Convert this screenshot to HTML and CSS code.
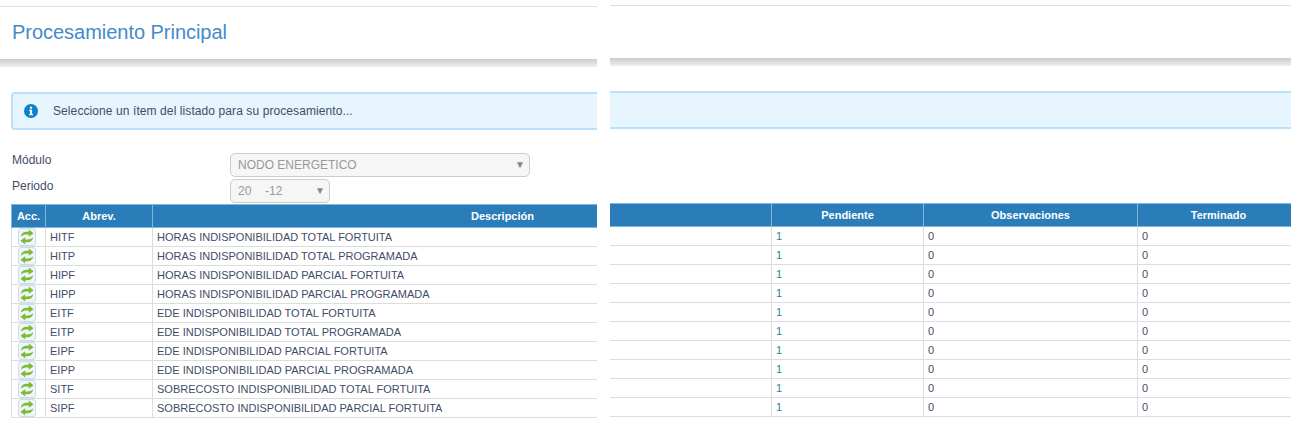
FILE: index.html
```html
<!DOCTYPE html>
<html lang="es">
<head>
  <meta charset="UTF-8" />
  <meta name="viewport" content="width=device-width, initial-scale=1.0" />
  <title>Procesamiento Principal</title>
  <link rel="stylesheet" href="styles.css">
</head>
<body>
  <svg class="defs" width="0" height="0">
    <symbol id="reload" viewBox="0 0 16 16">
      <path d="M1.8 7.8C2.2 4.6 4.6 2.8 7.4 2.8L9.8 2.8V0.6L14.6 4.2L9.8 7.8V5.6L7.6 5.6C5.4 5.6 3.6 6.2 1.8 7.8Z" fill="#7cbc34"/>
      <path d="M14.2 8.2C13.8 11.4 11.4 13.2 8.6 13.2L6.2 13.2V15.4L1.4 11.8L6.2 8.2V10.4L8.4 10.4C10.6 10.4 12.4 9.8 14.2 8.2Z" fill="#7cbc34"/>
    </symbol>
  </svg>

  <div class="panes">
    <section class="pane pane-left">
      <header class="head">
        <h1>Procesamiento Principal</h1>
      </header>
      <div class="head-shadow"></div>
      <div class="alert">
        <svg class="alert-icon" viewBox="0 0 14 14" width="14" height="14">
          <circle cx="7" cy="7" r="7" fill="#0a83c6"/>
          <rect x="5.9" y="2.7" width="2.2" height="2" fill="#fff"/>
          <path d="M5.2 5.8H8.1V9.9H9V11.2H5.2V9.9H6V7.1H5.2Z" fill="#fff"/>
        </svg>
        <span>Seleccione un ítem del listado para su procesamiento...</span>
      </div>
      <div class="filters">
        <div class="filter-row">
          <label>Módulo</label>
          <div class="select select-wide">NODO ENERGETICO<span class="arrow">▼</span></div>
        </div>
        <div class="filter-row">
          <label>Periodo</label>
          <div class="select select-small"><span class="year">20</span>-12<span class="arrow">▼</span></div>
        </div>
      </div>
      <table class="grid grid-left">
        <colgroup><col class="c-acc"><col class="c-abrev"><col class="c-desc"></colgroup>
        <thead>
          <tr><th>Acc.</th><th>Abrev.</th><th>Descripción</th></tr>
        </thead>
        <tbody>
          <tr><td class="acc"><span class="btn"><svg width="16" height="16"><use href="#reload"/></svg></span></td><td>HITF</td><td>HORAS INDISPONIBILIDAD TOTAL FORTUITA</td></tr>
          <tr><td class="acc"><span class="btn"><svg width="16" height="16"><use href="#reload"/></svg></span></td><td>HITP</td><td>HORAS INDISPONIBILIDAD TOTAL PROGRAMADA</td></tr>
          <tr><td class="acc"><span class="btn"><svg width="16" height="16"><use href="#reload"/></svg></span></td><td>HIPF</td><td>HORAS INDISPONIBILIDAD PARCIAL FORTUITA</td></tr>
          <tr><td class="acc"><span class="btn"><svg width="16" height="16"><use href="#reload"/></svg></span></td><td>HIPP</td><td>HORAS INDISPONIBILIDAD PARCIAL PROGRAMADA</td></tr>
          <tr><td class="acc"><span class="btn"><svg width="16" height="16"><use href="#reload"/></svg></span></td><td>EITF</td><td>EDE INDISPONIBILIDAD TOTAL FORTUITA</td></tr>
          <tr><td class="acc"><span class="btn"><svg width="16" height="16"><use href="#reload"/></svg></span></td><td>EITP</td><td>EDE INDISPONIBILIDAD TOTAL PROGRAMADA</td></tr>
          <tr><td class="acc"><span class="btn"><svg width="16" height="16"><use href="#reload"/></svg></span></td><td>EIPF</td><td>EDE INDISPONIBILIDAD PARCIAL FORTUITA</td></tr>
          <tr><td class="acc"><span class="btn"><svg width="16" height="16"><use href="#reload"/></svg></span></td><td>EIPP</td><td>EDE INDISPONIBILIDAD PARCIAL PROGRAMADA</td></tr>
          <tr><td class="acc"><span class="btn"><svg width="16" height="16"><use href="#reload"/></svg></span></td><td>SITF</td><td>SOBRECOSTO INDISPONIBILIDAD TOTAL FORTUITA</td></tr>
          <tr><td class="acc"><span class="btn"><svg width="16" height="16"><use href="#reload"/></svg></span></td><td>SIPF</td><td>SOBRECOSTO INDISPONIBILIDAD PARCIAL FORTUITA</td></tr>
        </tbody>
      </table>
    </section>

    <section class="pane pane-right">
      <header class="head"></header>
      <div class="head-shadow"></div>
      <div class="alert alert-cont"></div>
      <div class="filters"></div>
      <table class="grid grid-right">
        <colgroup><col class="c-rest"><col class="c-pend"><col class="c-obs"><col class="c-term"></colgroup>
        <thead>
          <tr><th></th><th>Pendiente</th><th>Observaciones</th><th>Terminado</th></tr>
        </thead>
        <tbody>
          <tr><td></td><td class="num-pend">1</td><td>0</td><td>0</td></tr>
          <tr><td></td><td class="num-pend">1</td><td>0</td><td>0</td></tr>
          <tr><td></td><td class="num-pend">1</td><td>0</td><td>0</td></tr>
          <tr><td></td><td class="num-pend">1</td><td>0</td><td>0</td></tr>
          <tr><td></td><td class="num-pend">1</td><td>0</td><td>0</td></tr>
          <tr><td></td><td class="num-pend">1</td><td>0</td><td>0</td></tr>
          <tr><td></td><td class="num-pend">1</td><td>0</td><td>0</td></tr>
          <tr><td></td><td class="num-pend">1</td><td>0</td><td>0</td></tr>
          <tr><td></td><td class="num-pend">1</td><td>0</td><td>0</td></tr>
          <tr><td></td><td class="num-pend">1</td><td>0</td><td>0</td></tr>
        </tbody>
      </table>
    </section>
  </div>
</body>
</html>
```

FILE: styles.css
```css
html, body {
  margin: 0;
  height: 430px;
  overflow: hidden;
  background: white;
}
body {
  font-family: "Liberation Sans", Arial, sans-serif;
  font-size: 12px;
  color: #3f4d67;
}
.defs {
  display: block;
  height: 0;
}
.panes {
  display: flex;
  gap: 13px;
}
.pane {
  overflow: hidden;
  height: 430px;
  box-sizing: border-box;
}
.pane-left {
  width: 597px;
  padding-top: 6px;
}
.pane-right {
  width: 681px;
  padding-top: 5px;
}

.head {
  height: 50px;
  border-top: 1px solid #dfdfdf;
  display: flex;
  align-items: center;
  padding-left: 12px;
  padding-bottom: 2px;
}
.head h1 {
  margin: 0;
  font-size: 20px;
  font-weight: normal;
  letter-spacing: -0.03px;
  color: #428bca;
}
.head-shadow {
  height: 8px;
  background: linear-gradient(#c9cdcd, #edf0f0);
}

.alert {
  margin: 25px 0 0 11px;
  width: 620px;
  height: 38px;
  box-sizing: border-box;
  display: flex;
  align-items: center;
  padding-left: 11px;
  gap: 15px;
  letter-spacing: 0.09px;
  background: #e6f5fe;
  border: 2px solid #b9e1fa;
  border-radius: 4px;
}
.alert-cont {
  margin-left: -20px;
  width: 740px;
}
.alert-icon {
  flex: none;
}

.filters {
  margin-top: 23px;
  height: 50px;
  display: flex;
  flex-direction: column;
  gap: 2px;
}
.filter-row {
  display: flex;
  height: 24px;
  padding-left: 12px;
}
.filter-row label {
  width: 218px;
  flex: none;
  line-height: 14px;
}
.select {
  position: relative;
  box-sizing: border-box;
  height: 24px;
  line-height: 22px;
  padding-left: 7px;
  color: #999;
  background: #f6f6f6;
  border: 1px solid #ccc;
  border-radius: 5px;
}
.select-wide {
  width: 300px;
}
.select-small {
  width: 100px;
}
.year {
  display: inline-block;
  width: 27px;
}
.arrow {
  position: absolute;
  right: 4px;
  top: 0;
  font-size: 10px;
  color: #888;
}

.grid {
  margin-top: 1px;
  border-collapse: collapse;
  table-layout: fixed;
  font-size: 11px;
}
.grid-left {
  margin-left: 11px;
  width: 841px;
}
.grid-right {
  margin-left: -1px;
  width: 690px;
}
.c-acc { width: 34px; }
.c-abrev { width: 107px; }
.c-desc { width: 700px; }
.c-rest { width: 162px; }
.c-pend { width: 152px; }
.c-obs { width: 214px; }
.c-term { width: 162px; }

.grid th {
  height: 22px;
  padding: 0;
  color: white;
  font-size: 11px;
  background: #2a7db8;
  border: 1px solid #7db7dd;
}
.grid td {
  height: 18px;
  padding: 0 4px;
  border: 1px solid #dddddd;
  white-space: nowrap;
}
.grid td.acc {
  padding: 0 3px 0 0;
  text-align: center;
  line-height: 0;
}
.btn {
  display: inline-flex;
  align-items: center;
  justify-content: center;
  box-sizing: border-box;
  width: 18px;
  height: 18px;
  background: #f0f5fa;
  border: 1px solid #cbdcf0;
  border-radius: 3px;
}
.num-pend {
  color: #2f7f8f;
}
```
